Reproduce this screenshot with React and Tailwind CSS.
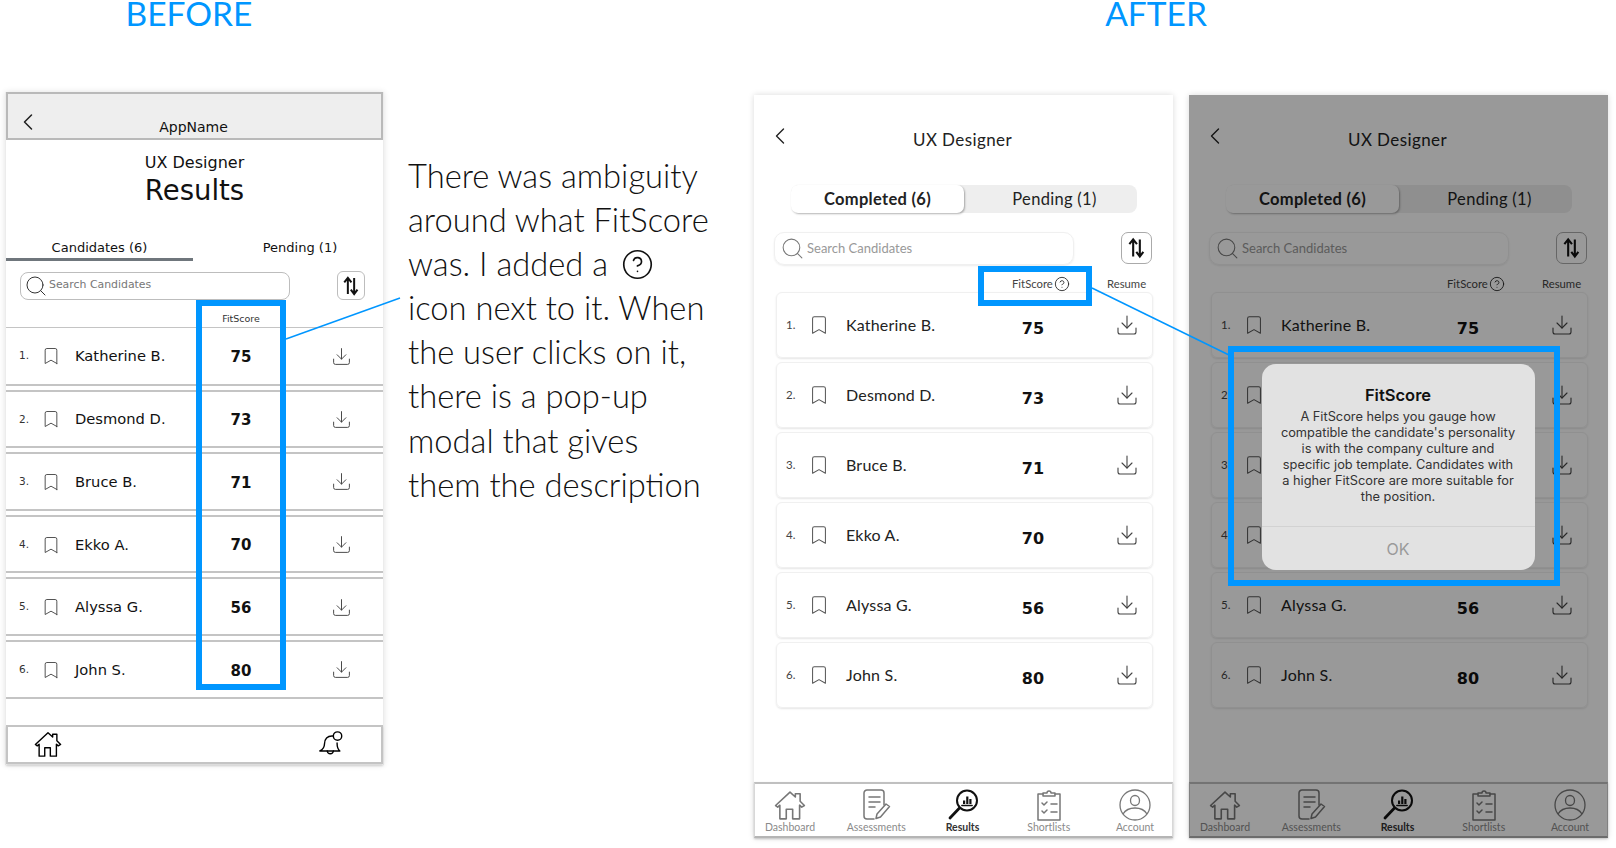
import React from 'react';
import { ChevronLeft, Search, Bookmark, Download, CircleHelp } from 'lucide-react';

const candidates = [
  ['1.', 'Katherine B.', 75],
  ['2.', 'Desmond D.', 73],
  ['3.', 'Bruce B.', 71],
  ['4.', 'Ekko A.', 70],
  ['5.', 'Alyssa G.', 56],
  ['6.', 'John S.', 80],
];

const SortIcon = ({ className }) => (
  <svg viewBox="0 0 20 24" className={className} fill="none" stroke="currentColor" strokeWidth="2.2">
    <path d="M6.5 21V3.5M2.5 8l4-5 4 5" />
    <path d="M13.5 3v17.5M9.8 16l3.7 5 3.7-5" />
  </svg>
);

const HomeIcon = ({ className }) => (
  <svg viewBox="0 0 30 30" className={className} fill="none" stroke="currentColor" strokeWidth="1.5" strokeLinejoin="round" strokeLinecap="round">
    <path d="M1.5 15.5 15 3l5 4.5V4.5h4.5V11.5l4 4-2.5 1.500-2-1.800V28h-6.500v-9h-6v9H5.500V15.200L3.500 17z" />
  </svg>
);

const BellIcon = ({ className }) => (
  <svg viewBox="0 0 30 30" className={className} fill="none" stroke="currentColor" strokeWidth="1.5" strokeLinejoin="round" strokeLinecap="round">
    <path d="M17 6.500C11 6 8 10 8 15c0 3.500-2 6-5 7.500h21.500C22.500 21 21.500 18.500 21.500 14" />
    <path d="M11 22.500c.5 4 6 4 6.500 0" />
    <circle cx="22" cy="6.500" r="4.500" />
  </svg>
);

const AssessIcon = ({ className }) => (
  <svg viewBox="0 0 32 32" className={className} fill="none" stroke="currentColor" strokeWidth="1.5" strokeLinecap="round" strokeLinejoin="round">
    <path d="M14 30H7a3 3 0 0 1-3-3V4a3 3 0 0 1 3-3h14a3 3 0 0 1 3 3v12" />
    <path d="M9 8h11M9 13h11M9 18h6" />
    <path d="m17 25 9-10 3.500 2.500-9 10.500-4.500 1.500z" />
  </svg>
);

const ResultsIcon = ({ className }) => (
  <svg viewBox="0 0 32 32" className={className} fill="none" stroke="currentColor" strokeLinecap="round">
    <circle cx="20" cy="11.500" r="10" strokeWidth="2" />
    <path d="M12.500 19 3 29" strokeWidth="2.800" />
    <path d="M14.800 16.500h10.400" strokeWidth="1.400" />
    <path d="M16 11.500h2.200V15H16zM19.200 7.500h2.200V15h-2.200zM22.300 10h2.200v5h-2.200z" fill="currentColor" stroke="none" />
  </svg>
);

const ShortlistIcon = ({ className }) => (
  <svg viewBox="0 0 28 32" className={className} fill="none" stroke="currentColor" strokeWidth="1.5" strokeLinecap="round" strokeLinejoin="round">
    <path d="M8 5H3v26h22V5h-5" />
    <path d="M8 7V4h4a2 2 0 0 1 4 0h4v3z" />
    <path d="m7 14 2 2 3-3M7 22l2 2 3-3M16 15h6M16 23h6" />
  </svg>
);

const AccountIcon = ({ className }) => (
  <svg viewBox="0 0 32 32" className={className} fill="none" stroke="currentColor" strokeWidth="1.300">
    <circle cx="16" cy="16" r="15" />
    <ellipse cx="16" cy="11.500" rx="4.500" ry="5" />
    <path d="M4 25c3-5 7-6 12-6s9 1 12 6" />
  </svg>
);

const navItems = [
  ['Dashboard', HomeIcon, 'w-[32px] h-[32px]'],
  ['Assessments', AssessIcon, 'w-[32px] h-[32px]'],
  ['Results', ResultsIcon, 'w-[32px] h-[32px]'],
  ['Shortlists', ShortlistIcon, 'w-[28px] h-[32px]'],
  ['Account', AccountIcon, 'w-[32px] h-[32px]'],
];

const BeforePhone = () => (
  <div className="relative w-[379px] h-[673px] flex flex-col bg-white border-x border-[#ececec] shadow-[0_0_6px_rgba(0,0,0,0.12)] font-['DejaVu_Sans',sans-serif] text-[#111]">
    <div className="relative h-[48px] bg-[#eeeeee] border-2 border-[#b9b9b9] flex items-end justify-center pr-[2px] text-[14px]">
      <ChevronLeft className="absolute left-[6px] top-[14px] w-[28px] h-[28px] text-[#222]" strokeWidth={1.300} />
      AppName
    </div>
    <p className="mt-[13px] text-center text-[16px] leading-[20px]">UX Designer</p>
    <p className="text-center text-[27.500px] leading-[34px]">Results</p>

    <div className="mt-[31px] flex text-[13px] leading-[20px]">
      <div className="w-[187px] h-[23px] text-center border-b-[3px] border-[#6f767c]">Candidates (6)</div>
      <div className="flex-1 pl-[24px] text-center">Pending (1)</div>
    </div>

    <div className="mt-[10px] flex items-center pl-[14px] pr-[18px] justify-between">
      <div className="w-[270px] h-[28px] flex items-center gap-[1px] px-[3px] rounded-[8px] border border-[#bdbdbd] text-[10.900px] text-[#777]">
        <Search className="w-[24px] h-[24px] text-[#333]" strokeWidth={1} />
        Search Candidates
      </div>
      <div className="w-[28px] h-[29px] flex items-center justify-center rounded-[6px] border border-[#bdbdbd]">
        <SortIcon className="w-[18px] h-[22px] text-[#111]" />
      </div>
    </div>

    <div className="h-[27px] pl-[190px] w-[280px] flex items-end justify-center pb-[1px] text-[9.500px] text-[#333]">FitScore</div>

    <div className="flex flex-col gap-[4px]">
      {candidates.map(([n, name, score]) => (
        <div key={n} className="h-[58.600px] flex items-center border-y-2 border-[#c4c4c4] first:border-t first:border-[#c4c4c4] pl-[13px] pt-[1px] text-[14.700px]">
          <span className="w-[22px] text-[10.500px] text-[#333]">{n}</span>
          <Bookmark className="w-[20px] h-[20px] text-[#444]" strokeWidth={1.100} />
          <span className="ml-[14px] w-[121px]">{name}</span>
          <span className="w-[90px] pt-[2px] text-center text-[15px] font-bold">{score}</span>
          <span className="ml-[45px]"><Download className="w-[21px] h-[21px] text-[#444]" strokeWidth={1.100} /></span>
        </div>
      ))}
    </div>

    <div className="mt-[26px] h-[39px] flex items-center justify-between pl-[26px] pr-[36px] border-2 border-[#c4c4c4] shadow-[0_2px_2px_rgba(0,0,0,0.15)] text-black">
      <HomeIcon className="w-[28px] h-[28px]" />
      <BellIcon className="w-[28px] h-[28px]" />
    </div>

    <div className="absolute left-[190px] top-[208px] w-[90px] h-[390px] border-[6px] border-[#0096ff]" />
  </div>
);

const AfterPhone = ({ dimmed }) => (
  <div className="relative w-[419px] h-[743px] flex flex-col bg-white shadow-[0_0_6px_rgba(0,0,0,0.15)] font-['Lato',sans-serif] text-[#222]">
    <div className="h-[90px] relative flex justify-center pt-[35px] pr-[2px] text-[17px] leading-[20px] tracking-[0.400px]">
      <ChevronLeft className="absolute left-[12px] top-[27px] w-[28px] h-[28px]" strokeWidth={1.200} />
      UX Designer
    </div>

    <div className="ml-[37px] w-[346px] h-[28px] flex rounded-[8px] bg-[#eeeeee] pt-[0px] text-[16.500px] tracking-[0.300px]">
      <div className="w-[173px] pt-[1px] flex items-center justify-center rounded-[7px] bg-white font-bold shadow-[1px_1px_2px_rgba(0,0,0,0.3)]">Completed (6)</div>
      <div className="flex-1 pl-[8px] pt-[1px] flex items-center justify-center">Pending (1)</div>
    </div>

    <div className="mt-[19px] ml-[20px] mr-[21px] flex justify-between">
      <div className="w-[300px] h-[33px] flex items-center gap-[2px] px-[5px] rounded-[10px] border border-[#f0f0f0] shadow-[0_1px_2px_rgba(0,0,0,0.08)] text-[13px] text-[#999]">
        <Search className="w-[25px] h-[25px] text-[#777]" strokeWidth={1} />
        Search Candidates
      </div>
      <div className="w-[31px] h-[32px] flex items-center justify-center rounded-[7px] border border-[#aaa]">
        <SortIcon className="w-[19px] h-[24px] text-[#111]" />
      </div>
    </div>

    <div className="h-[27px] flex items-start pt-[11px] text-[11.300px] leading-[16px] text-[#444]">
      <div className="ml-[258px] w-[72px] flex items-center gap-[1px]">
        FitScore
        <CircleHelp className="w-[16px] h-[16px] text-[#222]" strokeWidth={1.300} />
      </div>
      <span className="ml-[23px]">Resume</span>
    </div>

    <div className="ml-[22px] mr-[20px] flex flex-col gap-[4px]">
      {candidates.map(([n, name, score]) => (
        <div key={n} className="h-[66px] flex items-center rounded-[6px] border border-[#f0f0f0] shadow-[0_1px_2px_rgba(0,0,0,0.1)] pl-[9px] text-[16px] tracking-[0.200px]">
          <span className="w-[22px] text-[11.500px] text-[#444]">{n}</span>
          <Bookmark className="w-[22px] h-[22px] text-[#555]" strokeWidth={1.100} />
          <span className="ml-[16px] w-[137px]">{name}</span>
          <span className="w-[100px] text-center text-[16px] pt-[8px] font-['DejaVu_Sans',sans-serif] font-bold text-[#111]">{score}</span>
          <span className="ml-[32px]"><Download className="w-[24px] h-[24px] text-[#444]" strokeWidth={1.100} /></span>
        </div>
      ))}
    </div>

    <div className="mt-auto h-[56px] flex justify-between pl-[5px] pr-[7px] pt-[5px] border-x border-[#d8d8d8] border-t-2 border-t-[#c0c0c0] border-b-2 border-b-[#b5b5b5] shadow-[0_1px_2px_rgba(0,0,0,0.2)]">
      {navItems.map(([label, Icon, size]) => {
        const active = label === 'Results';
        return (
          <div key={label} className={`w-[60px] flex flex-col items-center text-[10.500px] leading-[12px] ${active ? 'text-[#333] font-bold' : 'text-[#8a8a8a]'}`}>
            <Icon className={`${size} ${active ? 'text-[#111]' : 'text-[#777]'}`} />
            <span className="whitespace-nowrap">{label}</span>
          </div>
        );
      })}
    </div>

    {!dimmed && <div className="absolute left-[224px] top-[171px] w-[114px] h-[40px] border-[6px] border-[#0096ff]" />}

    {dimmed && (
      <>
        <div className="absolute inset-0 bg-black/40" />
        <div className="absolute left-[39px] top-[251px] w-[332px] h-[240px] border-[6px] border-[#0096ff] flex items-center justify-center pl-[8px] pt-[2px] font-['Inter',sans-serif]">
          <div className="w-[273px] h-[206px] flex flex-col rounded-[14px] bg-[#e2e2e2] text-center">
            <p className="mt-[21px] text-[16.500px] leading-[20px] font-semibold text-[#111]">FitScore</p>
            <p className="mt-[4px] text-[12.800px] leading-[16px] text-[#333]">
              A FitScore helps you gauge how<br />
              compatible the candidate's personality<br />
              is with the company culture and<br />
              specific job template. Candidates with<br />
              a higher FitScore are more suitable for<br />
              the position.
            </p>
            <div className="mt-auto h-[44px] flex items-center justify-center border-t border-[#d2d2d2] text-[16px] text-[#9a9a9a]">OK</div>
          </div>
        </div>
      </>
    )}
  </div>
);

const App = () => {
  return (
    <div className="relative w-[1616px] h-[848px] overflow-hidden bg-white flex font-['Lato',sans-serif]">
      <div className="w-[383px] pl-[5px] flex flex-col">
        <h2 className="h-[28px] pr-[10px] text-center text-[33.500px] leading-[27px] text-[#0096ff]">BEFORE</h2>
        <div className="mt-[64px]"><BeforePhone /></div>
      </div>

      <div className="w-[371px] pl-[25px] pt-[154px] text-[32.700px] font-light leading-[44.100px] text-[#111]">
        <p>There was ambiguity</p>
        <p>around what FitScore</p>
        <p className="flex items-center gap-[13px]">was. I added a <CircleHelp className="w-[33px] h-[33px] text-[#111]" strokeWidth={1.200} /></p>
        <p>icon next to it. When</p>
        <p>the user clicks on it,</p>
        <p>there is a pop-up</p>
        <p>modal that gives</p>
        <p>them the description</p>
      </div>

      <div className="flex flex-col">
        <h2 className="h-[28px] pr-[50px] text-center text-[33.500px] leading-[27px] text-[#0096ff]">AFTER</h2>
        <div className="mt-[67px] flex gap-[16px]">
          <AfterPhone />
          <AfterPhone dimmed />
        </div>
      </div>

      <svg className="absolute inset-0 w-full h-full pointer-events-none" fill="none" stroke="#0096ff" strokeWidth="1.500">
        <path d="M286 339 400 298" />
        <path d="M1092 288 1229 355" />
      </svg>
    </div>
  );
};

export default App;
